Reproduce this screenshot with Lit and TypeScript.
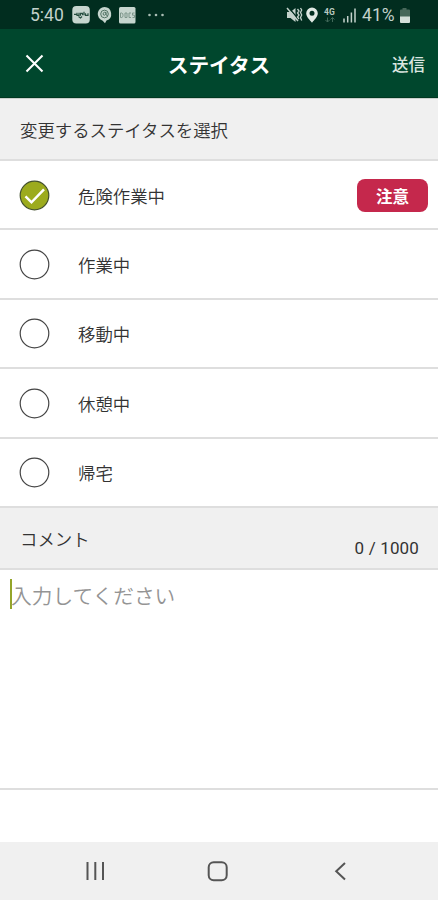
import { LitElement, html, css, svg } from "lit";
import { customElement, property, state } from "lit/decorators.js";

interface StatusOption {
  label: string;
  alert?: string;
}

const OPTIONS: StatusOption[] = [
  { label: "危険作業中", alert: "注意" },
  { label: "作業中" },
  { label: "移動中" },
  { label: "休憩中" },
  { label: "帰宅" },
];

@customElement("status-bar")
class StatusBar extends LitElement {
  static styles = css`
    :host {
      display: flex;
      box-sizing: border-box;
      height: 29px;
      padding: 1px 27px 0 30px;
      align-items: center;
      justify-content: space-between;
      background: #012d1f;
      color: #c3d2cb;
      font: 17.5px/28px Roboto, sans-serif;
    }
    .group { display: flex; align-items: center; }
    .clock { width: 42px; }
    .percent { width: 37px; letter-spacing: 0.1px; }
    svg { display: block; }
  `;

  render() {
    return html`
      <div class="group">
        <span class="clock">5:40</span>
        <svg width="96" height="28" viewBox="72 1 96 28">
          <rect x="72.3" y="6" width="17.5" height="17.5" rx="4" fill="#c6d5ce" />
          <path d="M74 14.300h2.500m.5-1.500v2.500h2v-2.500m1.500 3v-2.500h2v2m1.500-3.500v3.500m1.500-2v2h2.500v-2M78.500 16.500l2 1.500 1.500-1.500" stroke="#254e3f" stroke-width="1.200" fill="none" />
          <path d="M104.500 7a7 7 0 0 1 2 13.600l-1.500 2.600-2.300-2.500A7 7 0 0 1 104.500 7z" fill="#c6d5ce" />
          <circle cx="104.500" cy="14" r="3.800" fill="none" stroke="#527365" stroke-width="1" />
          <path d="M106 12.500c-2.500-1-3.500 1-2.500 2.500 1.500 1 2.500-1 2.500-2.500v2.500l1.500.5" fill="none" stroke="#527365" />
          <rect x="119" y="7" width="16.500" height="16.500" rx="1.500" fill="#c6d5ce" />
          <path d="M120.500 13v4.500h1.300c1.700 0 1.700-4.500 0-4.500zM125 13h2v4.500h-2zM131 13h-2v4.500h2M134.500 13h-2v2.200h2v2.300h-2" fill="none" stroke="#7d968b" stroke-width="1" />
          <g fill="#aabdb4">
            <circle cx="149.500" cy="15" r="1.300" />
            <circle cx="156" cy="15" r="1.300" />
            <circle cx="162.500" cy="15" r="1.300" />
          </g>
        </svg>
      </div>
      <div class="group">
        <svg width="76" height="28" viewBox="286 1 76 28">
          <path d="M287 12h3.500l5-4v14l-5-4H287z" fill="#c3d2cb" />
          <path d="M288.500 7.500l11 13" stroke="#012d1f" stroke-width="1.300" />
          <path d="M287 8l11 13" stroke="#c3d2cb" stroke-width="1.500" />
          <path d="M297.500 9l1.500 2-1.500 2 1.500 2-1.500 2 1.500 2M300.500 8l1.200 2-1.200 2.500 1.200 2.500-1.200 2.500 1.200 3" fill="none" stroke="#c3d2cb" stroke-width="1.300" />
          <path fill-rule="evenodd" d="M312 7.500a5.800 5.800 0 0 1 5.800 5.800c0 3.600-3.300 6.300-5.800 9.400-2.500-3.100-5.800-5.800-5.800-9.400a5.800 5.800 0 0 1 5.800-5.800zm0 3.200a2.500 2.500 0 1 0 0 5 2.500 2.500 0 0 0 0-5z" fill="#e0e9e4" />
          <text x="324" y="15" font-family="Roboto, sans-serif" font-size="8.500" font-weight="700" fill="#b9cac1">4G</text>
          <path d="M327.500 17.500v4.500m-2-2l2 2 2-2M332.500 22v-4.500m-2 2l2-2 2 2" fill="none" stroke="#42695a" stroke-width="1" />
          <path d="M344 18.500V22.500M347.700 16V22.500M351.400 12.500V22.500M355 8.500V22.500" stroke="#c3d2cb" stroke-width="1.500" />
        </svg>
        <span class="percent">41%</span>
        <svg width="12" height="28" viewBox="398 1 12 28">
          <path d="M401.500 8h4v1.500h2.500q1 0 1 1V17h-10v-6.500q0-1 1-1h1.500z" fill="#47685a" />
          <path d="M399 16.500h10V22q0 1-1 1h-8q-1 0-1-1z" fill="#d5e0da" />
        </svg>
      </div>
    `;
  }
}

@customElement("status-row")
class StatusRow extends LitElement {
  static styles = css`
    :host {
      display: flex;
      box-sizing: border-box;
      height: 69.400px;
      padding: 1px 10px 0 19px;
      align-items: center;
      border-bottom: 2px solid #dedede;
      background: #fff;
    }
    .mark { display: block; width: 31px; height: 31px; margin-right: 28px; }
    .label { flex: 1; padding-top: 1px; font-size: 17.400px; font-weight: 350; line-height: 26px; }
    .alert {
      width: 71px;
      height: 33px;
      border-radius: 8px;
      background: #c5284c;
      color: #fff;
      font-size: 16.500px;
      font-weight: 700;
      line-height: 34px;
      text-align: center;
    }
  `;

  @property() label = "";
  @property() alert = "";
  @property({ type: Boolean }) checked = false;

  render() {
    return html`
      <svg class="mark" viewBox="0 0 31 31">
        <circle cx="15.500" cy="15.500" r="14.300" fill=${this.checked ? "#9cab1d" : "#fff"} stroke=${this.checked ? "#43502c" : "#444"} stroke-width="1.200" />
        ${this.checked ? svg`<path d="M6.500 16.300l6 6L25 9.300" fill="none" stroke="#fff" stroke-width="2.500" />` : ""}
      </svg>
      <span class="label">${this.label}</span>
      ${this.alert ? html`<span class="alert">${this.alert}</span>` : ""}
    `;
  }
}

@customElement("app-root")
class AppRoot extends LitElement {
  static styles = css`
    :host {
      display: flex;
      flex-direction: column;
      height: 900px;
      overflow: hidden;
      background: #fff;
      color: #333;
      font-family: "Noto Sans CJK JP", sans-serif;
    }
    .header {
      display: grid;
      box-sizing: border-box;
      grid-template-columns: 1fr auto 1fr;
      height: 69px;
      padding: 0 13px 0 25px;
      align-items: center;
      border-bottom: 1px solid #003820;
      background: #00472d;
      color: #fff;
    }
    .close { display: block; width: 19px; height: 19px; }
    .title { padding: 2px 12px 0 0; font-size: 20.700px; font-weight: 700; line-height: 30px; }
    .send { justify-self: end; padding-top: 2px; color: #dbe6e0; font-size: 16.500px; font-weight: 500; line-height: 24px; }
    .section {
      display: flex;
      box-sizing: border-box;
      height: 63px;
      padding: 2px 19px 0 20px;
      justify-content: space-between;
      align-items: center;
      border-bottom: 2px solid #dedede;
      background: #f0f0f0;
      font-size: 17.400px;
      font-weight: 350;
      line-height: 26px;
    }
    .pick { border-top: 1px solid #c9d2cd; }
    .comment { height: 62px; }
    .count { padding-top: 18px; font: 17px/24px Roboto, sans-serif; letter-spacing: 0.150px; }
    .entry {
      display: flex;
      box-sizing: border-box;
      height: 220px;
      padding: 9px 10px 0;
      border-bottom: 2px solid #dedede;
      align-items: flex-start;
    }
    .caret { width: 2px; height: 30px; background: #94a52a; }
    .placeholder { margin-left: -1px; color: #949494; font-size: 20.700px; font-weight: 350; line-height: 32px; }
    .nav { height: 58px; margin-top: auto; background: #f0f0f0; }
    .nav svg { display: block; }
  `;

  @state() private selected = 0;

  render() {
    return html`
      <status-bar></status-bar>
      <div class="header">
        <svg class="close" viewBox="0 0 19 19"><path d="M1.500 1.500l16 16m0-16l-16 16" stroke="#fff" stroke-width="2.100" /></svg>
        <span class="title">ステイタス</span>
        <span class="send">送信</span>
      </div>
      <div class="section pick">変更するステイタスを選択</div>
      ${OPTIONS.map(
        (o, i) => html`<status-row
          .label=${o.label}
          .alert=${o.alert ?? ""}
          .checked=${i === this.selected}
          @click=${() => (this.selected = i)}
        ></status-row>`
      )}
      <div class="section comment">
        <span>コメント</span>
        <span class="count">0 / 1000</span>
      </div>
      <div class="entry">
        <span class="caret"></span>
        <span class="placeholder">入力してください</span>
      </div>
      <div class="nav">
        <svg width="438" height="58" viewBox="0 842 438 58" fill="none" stroke="#555" stroke-width="2">
          <path d="M87.500 862v18M95.300 862v18M103 862v18" />
          <rect x="208.700" y="862.200" width="18" height="18" rx="5" />
          <path d="M345 863l-8.800 8.300 8.800 8.300" />
        </svg>
      </div>
    `;
  }
}
